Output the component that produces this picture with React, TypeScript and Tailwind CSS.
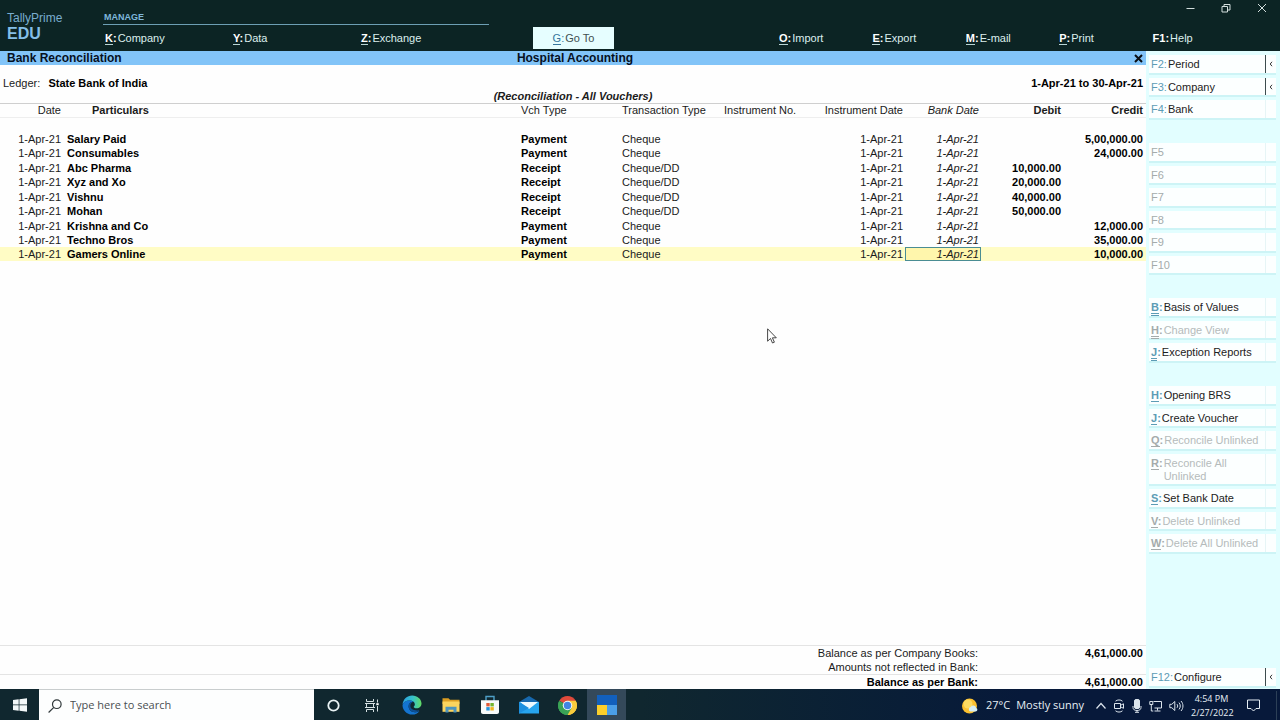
import type { ReactNode } from "react";

type MenuItem = { hotkey: string; label: string };

const manageMenu: MenuItem[] = [
  { hotkey: "K", label: "Company" },
  { hotkey: "Y", label: "Data" },
  { hotkey: "Z", label: "Exchange" },
];

const actionMenu: MenuItem[] = [
  { hotkey: "O", label: "Import" },
  { hotkey: "E", label: "Export" },
  { hotkey: "M", label: "E-mail" },
  { hotkey: "P", label: "Print" },
  { hotkey: "F1", label: "Help" },
];

const vouchers = [
  { particulars: "Salary Paid", type: "Payment", transaction: "Cheque", debit: "", credit: "5,00,000.00" },
  { particulars: "Consumables", type: "Payment", transaction: "Cheque", debit: "", credit: "24,000.00" },
  { particulars: "Abc Pharma", type: "Receipt", transaction: "Cheque/DD", debit: "10,000.00", credit: "" },
  { particulars: "Xyz and Xo", type: "Receipt", transaction: "Cheque/DD", debit: "20,000.00", credit: "" },
  { particulars: "Vishnu", type: "Receipt", transaction: "Cheque/DD", debit: "40,000.00", credit: "" },
  { particulars: "Mohan", type: "Receipt", transaction: "Cheque/DD", debit: "50,000.00", credit: "" },
  { particulars: "Krishna and Co", type: "Payment", transaction: "Cheque", debit: "", credit: "12,000.00" },
  { particulars: "Techno Bros", type: "Payment", transaction: "Cheque", debit: "", credit: "35,000.00" },
  { particulars: "Gamers Online", type: "Payment", transaction: "Cheque", debit: "", credit: "10,000.00" },
];

type SideItem = {
  hotkey: string;
  label?: string;
  disabled?: boolean;
  expandable?: boolean;
  underline?: "single" | "double";
};

const periodKeys: SideItem[] = [
  { hotkey: "F2", label: "Period", expandable: true },
  { hotkey: "F3", label: "Company", expandable: true },
  { hotkey: "F4", label: "Bank" },
];

const emptyKeys: SideItem[] = [
  { hotkey: "F5", disabled: true },
  { hotkey: "F6", disabled: true },
  { hotkey: "F7", disabled: true },
  { hotkey: "F8", disabled: true },
  { hotkey: "F9", disabled: true },
  { hotkey: "F10", disabled: true },
];

const viewKeys: SideItem[] = [
  { hotkey: "B", label: "Basis of Values", underline: "double" },
  { hotkey: "H", label: "Change View", disabled: true, underline: "double" },
  { hotkey: "J", label: "Exception Reports", underline: "double" },
];

const bankKeys: SideItem[] = [
  { hotkey: "H", label: "Opening BRS", underline: "single" },
  { hotkey: "J", label: "Create Voucher", underline: "single" },
  { hotkey: "Q", label: "Reconcile Unlinked", disabled: true, underline: "single" },
  { hotkey: "R", label: "Reconcile All Unlinked", disabled: true, underline: "single" },
  { hotkey: "S", label: "Set Bank Date", underline: "single" },
  { hotkey: "V", label: "Delete Unlinked", disabled: true, underline: "single" },
  { hotkey: "W", label: "Delete All Unlinked", disabled: true, underline: "single" },
];

const TopButton = ({ hotkey, label }: MenuItem) => (
  <button className="flex items-center h-[22px] text-[11px] text-[#dcefee] text-left">
    <span className="font-bold text-white">
      <span className={hotkey === "F1" ? "" : "border-b border-[#b9d5d5]"}>{hotkey}</span>:
    </span>
    <span className="pl-px">{label}</span>
  </button>
);

const SideButton = ({ hotkey, label, disabled, expandable, underline }: SideItem) => {
  const line =
    underline === "double"
      ? "border-b-3 border-double border-current"
      : underline === "single"
        ? "border-b border-current"
        : "";
  return (
    <button
      disabled={disabled}
      className="flex items-stretch w-full odd:min-h-5 even:min-h-[19px] bg-[#fcffff] border-b-2 border-[#cdf4f6] text-[11px] leading-[13px] text-left"
    >
      <span className="flex flex-1 pt-[3px] pb-px pl-[2px]">
        <span className={`${disabled ? "text-[#a4abab]" : "text-[#5c9cb5]"} ${underline ? "font-bold" : ""}`}>
          <span className={line}>{hotkey}</span>
          {label && ":"}
        </span>
        <span className={disabled ? "flex-1 pl-px text-[#b5bbbb]" : "flex-1 pl-px text-[#1c2222]"}>{label}</span>
      </span>
      <span
        className={
          expandable
            ? "flex items-center justify-center w-[11px] border-l border-[#3c4c4e] text-[#333]"
            : "w-[11px] border-l border-[#e6f5f6]"
        }
      >
        {expandable && (
          <svg className="w-1 h-[6px]" viewBox="0 0 4 6" fill="none" stroke="currentColor">
            <path d="M3 .8 1.2 3 3 5.2" />
          </svg>
        )}
      </span>
    </button>
  );
};

const SideGroup = ({ items }: { items: SideItem[] }) => (
  <div className="flex flex-col gap-[3px]">
    {items.map((item) => (
      <SideButton key={item.hotkey} {...item} />
    ))}
  </div>
);

const TaskButton = ({ label, active, children }: { label: string; active?: boolean; children: ReactNode }) => (
  <button
    aria-label={label}
    className={`flex items-center justify-center w-[39px] h-full pt-px ${active ? "bg-[#34495a]" : ""}`}
  >
    {children}
  </button>
);

const WindowsIcon = () => (
  <svg className="w-[14px] h-[14px]" viewBox="0 0 14 14" fill="#f2f7f8">
    <path d="M0 2.1 5.7 1.3v5.3H0zM6.4 1.2 14 .2v6.4H6.4zM0 7.3h5.7v5.4L0 11.9zM6.4 7.3H14v6.5l-7.6-1.1z" />
  </svg>
);

const SearchIcon = () => (
  <svg className="w-[14px] h-[14px]" viewBox="0 0 14 14" fill="none" stroke="#30383a" strokeWidth="1.2">
    <circle cx="8.8" cy="5.2" r="4.3" />
    <path d="M5.8 8.3.6 13.5" />
  </svg>
);

const CortanaIcon = () => (
  <svg className="w-[13px] h-[13px]" viewBox="0 0 13 13" fill="none" stroke="#e9f3f4" strokeWidth="1.8">
    <circle cx="6.5" cy="6.5" r="5.2" />
  </svg>
);

const TaskViewIcon = () => (
  <svg className="w-[15px] h-[13px]" viewBox="0 0 15 13" fill="none" stroke="#d5e0e2">
    <path d="M1.500 0v2.500h7V0M1.500 13v-2.500h7V13M1.500 4v5M8.500 4v5M0 4.500h10M0 8.500h10M12.500.5v3M12.500 7v5.500" />
    <path d="M11.300 4.200h2.400v2h-2.400z" fill="#fff" stroke="none" />
  </svg>
);

const EdgeIcon = () => (
  <svg className="w-5 h-5" viewBox="0 0 20 20">
    <defs>
      <linearGradient id="edgeTop" x1="0" x2="1">
        <stop offset="0" stopColor="#2a9fe0" />
        <stop offset=".55" stopColor="#36c3c9" />
        <stop offset="1" stopColor="#63dc62" />
      </linearGradient>
    </defs>
    <path d="M.6 9.5C1 4.300 5 .5 10.200.5c5.300 0 9.300 3.800 9.300 8 0 3-2.200 4.800-4.800 4.800-2.100 0-3.200-.8-3-1.600.9-.9 1.200-1.700 1.100-2.700C12.600 7 10.500 5.600 7.700 5.600 4 5.600 1.500 7.500.6 9.500z" fill="url(#edgeTop)" />
    <path d="M.5 10C1.200 7.400 4 5.500 7.600 5.600c1.400 0 2.800.5 3.700 1.200-3-.3-4.700 2-4.700 4.500 0 4 3.800 7 8.600 5.600.8-.3 1.600-.7 2.300-1-1.500 2.300-4.200 3.700-7.400 3.700C4.800 19.600.5 15.300.5 10z" fill="#1474d0" />
    <path d="M6.600 11.300c0-2.500 1.700-4.800 4.700-4.500-2 .6-3.200 2.500-2.900 4.700.4 2.600 3.300 4.400 9 3.800-1 .9-1.700 1.400-2.600 1.700-4.500 1.200-8.200-1.700-8.200-5.700z" fill="#0c4f96" />
  </svg>
);

const FolderIcon = () => (
  <svg className="w-[18px] h-4" viewBox="0 0 18 16">
    <path d="M.5 1.200h6l1.500 1.600h9.500V7H.5z" fill="#dc9e22" />
    <path d="M.5 4.500h17v10.300H.5z" fill="#fbd45e" />
    <path d="M3.500 15.500V9.800h11v5.700h-3v-2.800h-5v2.800z" fill="#4d94bd" />
  </svg>
);

const StoreIcon = () => (
  <svg className="w-5 h-5" viewBox="0 0 20 20">
    <path d="M6 6V1.500h8V6" fill="none" stroke="#4e9fc7" strokeWidth="1.400" />
    <path d="M1 5.200h18V17c0 1.200-.8 2-2 2H3c-1.200 0-2-.8-2-2z" fill="#f7fafa" />
    <path d="M6.300 8h3.400v3.400H6.300z" fill="#e05a38" />
    <path d="M10.400 8h3.400v3.400h-3.400z" fill="#74b52f" />
    <path d="M6.300 12.100h3.400v3.400H6.300z" fill="#2394dc" />
    <path d="M10.400 12.100h3.400v3.400h-3.400z" fill="#f2b61f" />
  </svg>
);

const MailIcon = () => (
  <svg className="w-5 h-[18px]" viewBox="0 0 20 18">
    <path d="M0 6 10 0l10 6v4H0z" fill="#1768ad" />
    <path d="M0 6h20v11.500H0z" fill="#27a5ee" />
    <path d="M1 6h18l-9 7z" fill="#eefaff" />
    <path d="M0 6v11.500L10 12z" fill="#1d90df" />
  </svg>
);

const ChromeIcon = () => (
  <svg className="w-[19px] h-[19px]" viewBox="0 0 20 20">
    <path d="M10 10 1.340 5A10 10 0 0 1 18.660 5z" fill="#e04a3b" />
    <path d="M10 10 18.660 5A10 10 0 0 1 10 20z" fill="#f8cb3c" />
    <path d="M10 10v10A10 10 0 0 1 1.340 5z" fill="#3aa356" />
    <path d="M10 5h8.660A10 10 0 0 1 10 20l4.330-7.500z" fill="#f8cb3c" />
    <path d="M5.670 12.500 1.340 5A10 10 0 0 0 10 20l4.330-7.500z" fill="#3aa356" />
    <circle cx="10" cy="10" r="5" fill="#f4f8fa" />
    <circle cx="10" cy="10" r="3.900" fill="#4285e4" />
  </svg>
);

const TallyIcon = () => (
  <svg className="w-5 h-5" viewBox="0 0 20 20">
    <path d="M0 0h20v10H0z" fill="#1260bd" />
    <path d="M0 10h10v10H0z" fill="#fccf2b" />
    <path d="M10 10h10v10H10z" fill="#4b9fe8" />
  </svg>
);

const WeatherIcon = () => (
  <svg className="w-4 h-4" viewBox="0 0 16 16">
    <circle cx="7.500" cy="8" r="7.500" fill="#fbc02f" />
    <circle cx="6" cy="6" r="4.500" fill="#fddb62" />
    <path d="M8.500 13.500a2.300 2.300 0 0 1 .2-4.500 3 3 0 0 1 5.500.9A1.900 1.900 0 0 1 14 13.500z" fill="#d6eff5" />
  </svg>
);

export default function App() {
  return (
    <div className="flex flex-col min-h-screen bg-white text-[#1b1b1b] font-['Liberation_Sans',Arial,sans-serif] overflow-hidden">
      {/* Top menu */}
      <header className="flex h-[51px] bg-[#0c2424]">
        <div className="w-[103px] pt-[11px] pl-[7px] text-[#84bfe8]">
          <div className="text-[12px] leading-[14px] text-[#79adce]">TallyPrime</div>
          <div className="text-[16px] leading-[18px] font-bold">EDU</div>
        </div>
        <div className="flex flex-col justify-end w-[386px] pb-[2px]">
          <div className="pl-px mb-[2px] text-[9px] leading-[14px] font-bold text-[#7fb8dc] border-b border-[#6d9fb4]">
            MANAGE
          </div>
          <nav className="grid grid-cols-3 pl-[2px]">
            {manageMenu.map((item) => (
              <TopButton key={item.hotkey} {...item} />
            ))}
          </nav>
        </div>
        <div className="flex items-end pb-[2px] ml-11">
          <button className="w-[81px] h-[22px] bg-[#e6feff] text-[11px] text-[#3f5052]">
            <span className="text-[#35769d]">
              <span className="border-b border-current">G</span>:
            </span>
            <span className="pl-px">Go To</span>
          </button>
        </div>
        <div className="flex flex-col justify-between w-[501px] pb-[2px] ml-auto">
          <div className="flex items-center justify-end gap-6 h-4 pr-[13px] text-[#d3dedd]">
            <button aria-label="Minimize">
              <svg className="w-[10px] h-[10px]" viewBox="0 0 10 10" stroke="currentColor">
                <path d="M1.500 5.500h8" />
              </svg>
            </button>
            <button aria-label="Restore">
              <svg className="w-[10px] h-[10px] mx-[2px]" viewBox="0 0 10 10" fill="none" stroke="currentColor">
                <path d="M1 3.500h5.500V9H1zM3 3.500v-2h6v5.500H6.500" />
              </svg>
            </button>
            <button aria-label="Close">
              <svg className="w-[10px] h-[10px]" viewBox="0 0 10 10" stroke="currentColor">
                <path d="m1 1 8 8M9 1 1 9" />
              </svg>
            </button>
          </div>
          <nav className="grid grid-cols-5 mr-[34px]">
            {actionMenu.map((item) => (
              <TopButton key={item.hotkey} {...item} />
            ))}
          </nav>
        </div>
      </header>

      <div className="flex flex-1">
        <main className="relative flex flex-col flex-1 bg-[#fefefe]">
          <div className="grid grid-cols-3 items-center h-[14px] pl-[7px] pr-[3px] bg-[#82c4f8] text-[12px] leading-[14px] font-bold text-[#06101f]">
            <h1>Bank Reconciliation</h1>
            <div className="text-center">Hospital Accounting</div>
            <button aria-label="Close report" className="justify-self-end">
              <svg className="w-[9px] h-[9px]" viewBox="0 0 9 9" stroke="#0a0f14" strokeWidth="2">
                <path d="m1 1 7 7M8 1 1 8" />
              </svg>
            </button>
          </div>

          <div className="flex justify-between pt-[11px] px-[3px] text-[11px] leading-[14px]">
            <div>
              Ledger: <span className="pl-[5px] font-bold text-black">State Bank of India</span>
            </div>
            <div className="font-bold text-black">1-Apr-21 to 30-Apr-21</div>
          </div>
          <div className="text-center text-[11px] leading-[13px] font-bold italic">(Reconciliation - All Vouchers)</div>

          {/* Voucher list */}
          <table className="w-full table-fixed border-collapse text-[11px] leading-[14px]">
            <colgroup>
              <col className="w-[62px]" />
              <col />
              <col className="w-[101px]" />
              <col className="w-[102px]" />
              <col className="w-[91px]" />
              <col className="w-[90px]" />
              <col className="w-[76px]" />
              <col className="w-[80px]" />
              <col className="w-[85px]" />
            </colgroup>
            <thead>
              <tr className="h-[13px] leading-[13px] border-y border-t-[#cfcfcf] border-b-[#eeeeee]">
                <th className="font-normal text-right pr-px">Date</th>
                <th className="text-left pl-[30px]">Particulars</th>
                <th className="font-normal text-left">Vch Type</th>
                <th className="font-normal text-left">Transaction Type</th>
                <th className="font-normal text-left whitespace-nowrap">Instrument No.</th>
                <th className="font-normal text-right pr-[2px]">Instrument Date</th>
                <th className="font-normal italic text-right pr-[2px]">Bank Date</th>
                <th className="text-right">Debit</th>
                <th className="text-right pr-[3px]">Credit</th>
              </tr>
            </thead>
            <tbody className="before:block before:h-[13px]">
              {vouchers.map((voucher, index) => {
                const selected = index === vouchers.length - 1;
                return (
                  <tr
                    key={voucher.particulars}
                    className={selected ? "h-[14px] bg-[#fffcc5]" : "odd:h-[15px] even:h-[14px]"}
                  >
                    <td className="text-right pr-px">1-Apr-21</td>
                    <td className="font-bold pl-[5px] text-black">{voucher.particulars}</td>
                    <td className="font-bold text-black">{voucher.type}</td>
                    <td>{voucher.transaction}</td>
                    <td></td>
                    <td className="text-right pr-[2px]">1-Apr-21</td>
                    {selected ? (
                      <td>
                        <input
                          aria-label="Bank date"
                          defaultValue="1-Apr-21"
                          className="block w-full h-[14px] pr-[2px] bg-[#fff6ac] italic text-right outline -outline-offset-1 outline-[#4a8d93] rounded-none"
                        />
                      </td>
                    ) : (
                      <td className="italic text-right pr-[2px]">1-Apr-21</td>
                    )}
                    <td className="font-bold text-right text-black">{voucher.debit}</td>
                    <td className="font-bold text-right pr-[3px] text-black">{voucher.credit}</td>
                  </tr>
                );
              })}
            </tbody>
          </table>

          {/* Closing balances */}
          <table className="w-full mt-auto table-fixed border-collapse border-t border-[#e4e4e4] text-[11px] leading-[14px]">
            <colgroup>
              <col />
              <col className="w-[168px]" />
            </colgroup>
            <tbody>
              <tr className="h-[14px]">
                <th className="font-normal text-right">Balance as per Company Books:</th>
                <td className="font-bold text-right pr-[3px] text-black">4,61,000.00</td>
              </tr>
              <tr className="h-[14px]">
                <th className="font-normal text-right">Amounts not reflected in Bank:</th>
                <td></td>
              </tr>
              <tr className="h-[14px] border-t border-[#e4e4e4] text-black">
                <th className="text-right">Balance as per Bank:</th>
                <td className="font-bold text-right pr-[3px]">4,61,000.00</td>
              </tr>
            </tbody>
          </table>

          {/* Mouse pointer */}
          <svg className="absolute left-[767px] top-[277px] w-[10px] h-4" viewBox="0 0 10 16">
            <path d="M.6.8v12.400l2.900-2.700 2 4.500 1.900-.8-2-4.400h3.900z" fill="#fff" stroke="#333" strokeWidth=".9" />
          </svg>
        </main>

        {/* Shortcut buttons */}
        <aside className="flex flex-col w-[134px] pt-1 pb-px pl-[3px] pr-1 gap-[23px] bg-[#e2feff]">
          <SideGroup items={periodKeys} />
          <SideGroup items={emptyKeys} />
          <SideGroup items={viewKeys} />
          <SideGroup items={bankKeys} />
          <div className="mt-auto">
            <SideButton hotkey="F12" label="Configure" expandable />
          </div>
        </aside>
      </div>

      {/* Windows taskbar */}
      <footer className="flex h-[31px] bg-linear-to-r from-[#10272f] from-50% to-[#07193a] to-80% font-['Open_Sans','Noto_Sans',sans-serif] text-[#e6eef4]">
        <TaskButton label="Start">
          <WindowsIcon />
        </TaskButton>
        <label className="flex items-center gap-2 w-[275px] pt-px pl-[9px] bg-[#fdfefe] border-t border-[#c9cdce]">
          <SearchIcon />
          <input
            aria-label="Search"
            placeholder="Type here to search"
            className="flex-1 min-w-0 text-[11px] placeholder:text-[#4a4f52] outline-none"
          />
        </label>
        <TaskButton label="Cortana">
          <CortanaIcon />
        </TaskButton>
        <TaskButton label="Task view">
          <TaskViewIcon />
        </TaskButton>
        <TaskButton label="Edge">
          <EdgeIcon />
        </TaskButton>
        <TaskButton label="File Explorer">
          <FolderIcon />
        </TaskButton>
        <TaskButton label="Store">
          <StoreIcon />
        </TaskButton>
        <TaskButton label="Mail">
          <MailIcon />
        </TaskButton>
        <TaskButton label="Chrome">
          <ChromeIcon />
        </TaskButton>
        <TaskButton label="TallyPrime" active>
          <TallyIcon />
        </TaskButton>

        <div className="flex items-center pt-[2px] ml-auto text-[11px]">
          <button className="flex items-center mr-3">
            <WeatherIcon />
            <span className="ml-2">27°C</span>
            <span className="ml-[6px]">Mostly sunny</span>
          </button>
          <div className="flex items-center gap-[7px] text-[#dbe4ec]">
            <svg className="w-[10px] h-[10px]" viewBox="0 0 10 10" fill="none" stroke="currentColor" strokeWidth="1.200">
              <path d="m.5 7.500 4.500-5 4.500 5" />
            </svg>
            <svg className="w-[12px] h-[14px]" viewBox="0 0 12 14" fill="none" stroke="currentColor">
              <path d="M2.500 2.200C4.500.5 7.500.5 9.500 2.200M2.500 11.800c2 1.700 5 1.700 7 0M1.500 4.500h6v5h-6zM7.500 6.300l3-1.500v4.500l-3-1.500" />
            </svg>
            <svg className="w-[10px] h-[14px]" viewBox="0 0 10 14" fill="none" stroke="currentColor">
              <rect x="2.500" y=".5" width="5" height="9" rx="1.500" fill="currentColor" />
              <path d="M1 7v1.500C1 10.500 2.500 11.500 5 11.500s4-1 4-3V7M5 11.500V13M3 13.300h4" />
            </svg>
            <svg className="w-[13px] h-[12px]" viewBox="0 0 13 12" fill="none" stroke="currentColor">
              <path d="M4.500 1.500h8v6.500h-7M8.500 8v2.500M5.500 11h6M.8 1.500h3v3h-3zM2.300 4.500V11h2" />
            </svg>
            <svg className="w-[15px] h-[12px]" viewBox="0 0 15 12" fill="none" stroke="currentColor">
              <path d="M.8 4.300h2l3-2.800v9l-3-2.800h-2zM8 4.200c.9 1 .9 2.600 0 3.600M10 2.600c1.700 1.900 1.700 4.900 0 6.800M12 1c2.600 2.900 2.600 7.100 0 10" />
            </svg>
          </div>
          <div className="w-[41px] ml-[7px] text-center text-[9px] leading-[14px] whitespace-nowrap">
            <div>4:54 PM</div>
            <div>2/27/2022</div>
          </div>
          <button aria-label="Notifications" className="ml-[15px] mr-4">
            <svg className="w-[13px] h-[13px]" viewBox="0 0 13 13" fill="none" stroke="currentColor">
              <path d="M.5 1h12v8.500H9L6.500 12 4 9.500H.5z" />
            </svg>
          </button>
          <div className="w-1 h-[29px] border-l border-[#2c4057]" />
        </div>
      </footer>
    </div>
  );
}
